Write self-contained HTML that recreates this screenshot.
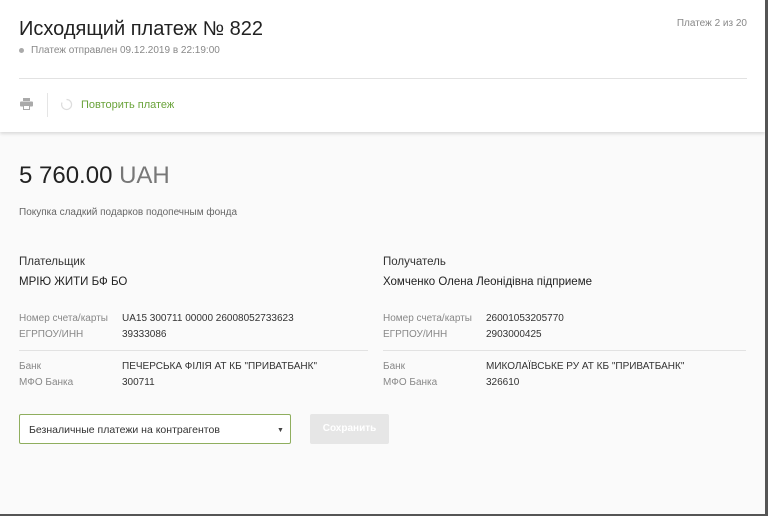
<!DOCTYPE html>
<html><head><meta charset="utf-8"><style>
*{margin:0;padding:0;box-sizing:border-box}
body{width:768px;height:516px;overflow:hidden;background:#fafafa;font-family:"Liberation Sans","DejaVu Sans",sans-serif;color:#222;position:relative}
.top{position:absolute;left:0;top:0;width:765px;height:132px;background:#fff;box-shadow:0 2px 3px rgba(0,0,0,.12)}
.a{position:absolute;white-space:nowrap}
.rb{position:absolute;right:0;top:0;width:3px;height:516px;background:#555}
.bb{position:absolute;left:0;bottom:0;width:768px;height:2px;background:#555}
.lbl{font-size:10px;color:#888}
.val{font-size:10px;color:#333}
</style></head><body>
<div class="top">
<div class="a" style="left:19px;top:18px;font-size:20px;color:#222">Исходящий платеж № 822</div>
<div class="a" style="left:19px;top:48px;width:5px;height:5px;border-radius:50%;background:#aaa"></div>
<div class="a" style="left:31px;top:45px;font-size:10px;color:#888">Платеж отправлен 09.12.2019 в 22:19:00</div>
<div class="a" style="right:18px;top:18px;font-size:10px;color:#888">Платеж 2 из 20</div>
<div class="a" style="left:19px;top:78px;width:728px;height:1px;background:#e2e2e2"></div>
<svg class="a" style="left:20px;top:98px" width="13" height="12" viewBox="0 0 13 12"><rect x="3" y="0" width="7" height="3" fill="#aaa"/><rect x="0" y="3.5" width="13" height="5" rx="1" fill="#aaa"/><rect x="3" y="7" width="7" height="5" fill="#aaa"/><rect x="4" y="8" width="5" height="3" fill="#fff"/></svg>
<div class="a" style="left:47px;top:93px;width:1px;height:24px;background:#e5e5e5"></div>
<svg class="a" style="left:60px;top:98px" width="13" height="13" viewBox="0 0 13 13"><path d="M6.5 1.5a5 5 0 1 1-4.5 3" fill="none" stroke="#ddd" stroke-width="1.2"/></svg>
<div class="a" style="left:81px;top:99px;font-size:11px;color:#6aa33a">Повторить платеж</div>
</div>
<div class="a" style="left:19px;top:162px;font-size:24px;color:#222">5 760.00 <span style="color:#777">UAH</span></div>
<div class="a" style="left:19px;top:207px;font-size:10px;color:#666">Покупка сладкий подарков подопечным фонда</div>

<div class="a" style="left:19px;top:256px;font-size:11.5px;color:#333">Плательщик</div>
<div class="a" style="left:19px;top:276px;font-size:11.5px;color:#222">МРІЮ ЖИТИ БФ БО</div>
<div class="a lbl" style="left:19px;top:313px">Номер счета/карты</div>
<div class="a val" style="left:122px;top:313px">UA15 300711 00000 26008052733623</div>
<div class="a lbl" style="left:19px;top:329px">ЕГРПОУ/ИНН</div>
<div class="a val" style="left:122px;top:329px">39333086</div>
<div class="a" style="left:19px;top:350px;width:349px;height:1px;background:#e2e2e2"></div>
<div class="a lbl" style="left:19px;top:361px">Банк</div>
<div class="a val" style="left:122px;top:361px">ПЕЧЕРСЬКА ФІЛІЯ АТ КБ "ПРИВАТБАНК"</div>
<div class="a lbl" style="left:19px;top:377px">МФО Банка</div>
<div class="a val" style="left:122px;top:377px">300711</div>

<div class="a" style="left:383px;top:256px;font-size:11.5px;color:#333">Получатель</div>
<div class="a" style="left:383px;top:276px;font-size:11.5px;color:#222">Хомченко Олена Леонідівна підприеме</div>
<div class="a lbl" style="left:383px;top:313px">Номер счета/карты</div>
<div class="a val" style="left:486px;top:313px">26001053205770</div>
<div class="a lbl" style="left:383px;top:329px">ЕГРПОУ/ИНН</div>
<div class="a val" style="left:486px;top:329px">2903000425</div>
<div class="a" style="left:383px;top:350px;width:363px;height:1px;background:#e2e2e2"></div>
<div class="a lbl" style="left:383px;top:361px">Банк</div>
<div class="a val" style="left:486px;top:361px">МИКОЛАЇВСЬКЕ РУ АТ КБ "ПРИВАТБАНК"</div>
<div class="a lbl" style="left:383px;top:377px">МФО Банка</div>
<div class="a val" style="left:486px;top:377px">326610</div>

<div class="a" style="left:19px;top:414px;width:272px;height:30px;border:1px solid #8fae5e;border-radius:2px;background:#fff"></div>
<div class="a" style="left:29px;top:424px;font-size:10.5px;color:#333">Безналичные платежи на контрагентов</div>
<div class="a" style="left:277px;top:427px;font-size:7px;color:#444">▼</div>
<div class="a" style="left:310px;top:414px;width:79px;height:30px;background:#e6e6e6;border-radius:2px;color:#fff;font-size:10px;font-weight:bold;text-align:center;line-height:30px">Сохранить</div>
<div class="rb"></div><div class="bb"></div>
</body></html>
